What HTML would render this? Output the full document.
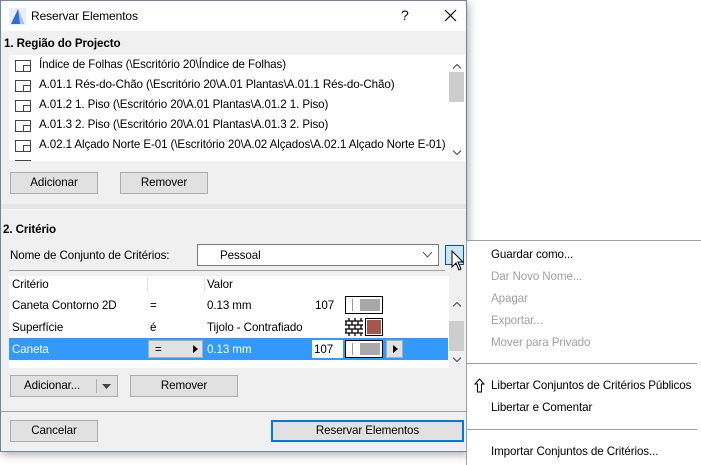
<!DOCTYPE html>
<html><head><meta charset="utf-8"><style>
*{box-sizing:border-box;margin:0;padding:0}
body{width:701px;height:465px;background:#fff;font-family:"Liberation Sans",sans-serif;font-size:11.6px;letter-spacing:-0.1px;color:#000;position:relative;overflow:hidden}
.a{position:absolute}
.dlg{left:0;top:0;width:467px;height:452px;background:#f0f0f0;border:1px solid #6d86a3;box-shadow:2px 3px 8px rgba(0,0,0,.3)}
.btn{position:absolute;background:#e1e1e1;border:1px solid #adadad;text-align:center;line-height:19px}
.t{position:absolute;white-space:nowrap}
.ico{position:absolute;width:16px;height:12px;border:1px solid #444;background:#fff}
.ico:after{content:"";position:absolute;right:0;bottom:0;width:6px;height:5px;border-left:1px solid #444;border-top:1px solid #444}
.mi{position:absolute;left:491px;white-space:nowrap}
.dis{color:#a0a0a0}
</style></head><body>
<div class="a dlg"></div>
<div class="a" style="left:1px;top:1px;width:465px;height:30px;background:#fff"></div>
<svg class="a" style="left:9px;top:8px" width="17" height="17"><rect x="0" y="0" width="17" height="17" fill="#e8eef6"/><path d="M2 16 L9 1 L15 16 Z" fill="#2b6fd0"/><path d="M9 1 L15 16 L11 16 Z" fill="#9cc2ee"/></svg>
<div class="t" style="left:31px;top:9px;font-size:12px">Reservar Elementos</div>
<div class="t" style="left:401px;top:7px;font-size:14px">?</div>
<svg class="a" style="left:444px;top:9px" width="13" height="13"><path d="M1 1L12 12M12 1L1 12" stroke="#000" stroke-width="1.2"/></svg>
<div class="t" style="left:4px;top:37px;font-weight:bold">1. Região do Projecto</div>
<div class="a" style="left:9px;top:55px;width:456px;height:106px;background:#fff;overflow:hidden">
<div class="ico" style="left:6px;top:5px"></div><div class="t" style="left:30px;top:3px">Índice de Folhas (\Escritório 20\Índice de Folhas)</div>
<div class="ico" style="left:6px;top:25px"></div><div class="t" style="left:30px;top:23px">A.01.1 Rés-do-Chão (\Escritório 20\A.01 Plantas\A.01.1 Rés-do-Chão)</div>
<div class="ico" style="left:6px;top:45px"></div><div class="t" style="left:30px;top:43px">A.01.2 1. Piso (\Escritório 20\A.01 Plantas\A.01.2 1. Piso)</div>
<div class="ico" style="left:6px;top:65px"></div><div class="t" style="left:30px;top:63px">A.01.3 2. Piso (\Escritório 20\A.01 Plantas\A.01.3 2. Piso)</div>
<div class="ico" style="left:6px;top:85px"></div><div class="t" style="left:30px;top:83px">A.02.1 Alçado Norte E-01 (\Escritório 20\A.02 Alçados\A.02.1 Alçado Norte E-01)</div>
<div class="ico" style="left:6px;top:105px"></div>
<div class="a" style="left:440px;top:0;width:16px;height:106px;background:#fff"></div>
<svg class="a" style="left:444px;top:9px" width="8" height="5"><path d="M0 4.5L4 0.5L8 4.5" fill="none" stroke="#555" stroke-width="1.2"/></svg>
<div class="a" style="left:440px;top:17px;width:15px;height:30px;background:#cdcdcd"></div>
<svg class="a" style="left:444px;top:95px" width="8" height="5"><path d="M0 0.5L4 4.5L8 0.5" fill="none" stroke="#555" stroke-width="1.2"/></svg>
</div>
<div class="btn" style="left:10px;top:172px;width:88px;height:22px">Adicionar</div>
<div class="btn" style="left:120px;top:172px;width:88px;height:22px">Remover</div>
<div class="a" style="left:1px;top:204px;width:465px;height:6px;background:#e6e6e6;border-bottom:1px solid #f8f8f8"></div>
<div class="t" style="left:3px;top:223px;font-weight:bold">2. Critério</div>
<div class="t" style="left:10px;top:249px">Nome de Conjunto de Critérios:</div>
<div class="a" style="left:197px;top:244px;width:242px;height:22px;background:#fff;border:1px solid #7a7a7a"></div>
<div class="t" style="left:220px;top:249px">Pessoal</div>
<svg class="a" style="left:423px;top:252px" width="9" height="6"><path d="M0 0L4.5 5L9 0" fill="none" stroke="#555"/></svg>
<div class="a" style="left:445px;top:245px;width:19px;height:20px;background:#cce4f7;border:1px solid #005499"></div>
<svg class="a" style="left:451px;top:250px" width="14" height="24"><path d="M1 1 L1 17 L5 13 L8 20 L10 19 L7 12 L12 12 Z" fill="#fff" stroke="#000"/></svg>
<div class="a" style="left:9px;top:270px;width:436px;height:1px;background:#a0a0a0"></div>
<div class="a" style="left:9px;top:276px;width:440px;height:92px;background:#fff"></div>
<div class="a" style="left:147px;top:277px;width:1px;height:16px;background:#e5e5e5"></div>
<div class="a" style="left:204px;top:277px;width:1px;height:16px;background:#e5e5e5"></div>
<div class="t" style="left:12px;top:278px">Critério</div>
<div class="t" style="left:207px;top:278px">Valor</div>
<div class="t" style="left:12px;top:299px">Caneta Contorno 2D</div>
<div class="t" style="left:150px;top:299px">=</div>
<div class="t" style="left:207px;top:299px">0.13 mm</div>
<div class="t" style="left:315px;top:299px">107</div>
<div class="a" style="left:345px;top:296px;width:38px;height:18px;border:1px solid #000;background:#fff"></div>
<div class="a" style="left:352px;top:299px;width:1px;height:12px;background:#999"></div>
<div class="a" style="left:360px;top:299px;width:20px;height:12px;background:#a8a8a8"></div>
<div class="t" style="left:12px;top:321px">Superfície</div>
<div class="t" style="left:150px;top:321px">é</div>
<div class="t" style="left:207px;top:321px">Tijolo - Contrafiado</div>
<svg class="a" style="left:345px;top:318px" width="18" height="18"><rect width="18" height="18" fill="#fff"/><path d="M0 3H18M0 7H18M0 11H18M0 15H18M4 0V3M10 0V3M16 0V3M1 3V7M7 3V7M13 3V7M4 7V11M10 7V11M16 7V11M1 11V15M7 11V15M13 11V15M4 15V18M10 15V18M16 15V18" stroke="#000" stroke-width="1.3"/></svg>
<div class="a" style="left:365px;top:318px;width:18px;height:18px;border:1px solid #000;background:#a9564a;box-shadow:inset 0 0 0 1px #fff"></div>
<div class="a" style="left:9px;top:338px;width:439px;height:22px;background:#3399ff"></div>
<div class="t" style="left:12px;top:343px;color:#fff">Caneta</div>
<div class="a" style="left:148px;top:340px;width:55px;height:18px;background:#e1e1e1;border:1px solid #adadad"></div>
<div class="t" style="left:155px;top:343px">=</div>
<svg class="a" style="left:193px;top:345px" width="5" height="8"><path d="M0 0L5 4L0 8Z" fill="#000"/></svg>
<div class="t" style="left:207px;top:343px;color:#fff">0.13 mm</div>
<div class="a" style="left:312px;top:340px;width:31px;height:18px;background:#fff"></div>
<div class="t" style="left:314px;top:343px">107</div>
<div class="a" style="left:345px;top:340px;width:38px;height:18px;border:1px solid #000;background:#fff"></div>
<div class="a" style="left:352px;top:343px;width:1px;height:12px;background:#999"></div>
<div class="a" style="left:360px;top:343px;width:20px;height:12px;background:#a8a8a8"></div>
<div class="a" style="left:386px;top:340px;width:17px;height:18px;background:#e1e1e1;border:1px solid #adadad"></div>
<svg class="a" style="left:393px;top:345px" width="5" height="8"><path d="M0 0L5 4L0 8Z" fill="#000"/></svg>
<div class="a" style="left:449px;top:293px;width:15px;height:68px;background:#f0f0f0"></div>
<svg class="a" style="left:453px;top:302px" width="8" height="5"><path d="M0 4.5L4 0.5L8 4.5" fill="none" stroke="#555" stroke-width="1.2"/></svg>
<div class="a" style="left:449px;top:321px;width:15px;height:30px;background:#cdcdcd"></div>
<svg class="a" style="left:453px;top:357px" width="8" height="5"><path d="M0 0.5L4 4.5L8 0.5" fill="none" stroke="#555" stroke-width="1.2"/></svg>
<div class="btn" style="left:10px;top:375px;width:108px;height:22px;text-align:left;padding-left:13px">Adicionar...</div>
<div class="a" style="left:96px;top:379px;width:1px;height:14px;background:#adadad"></div>
<svg class="a" style="left:102px;top:384px" width="9" height="5"><path d="M0 0L9 0L4.5 5Z" fill="#444"/></svg>
<div class="btn" style="left:130px;top:375px;width:108px;height:22px">Remover</div>
<div class="a" style="left:1px;top:411px;width:465px;height:1px;background:#a0a0a0"></div>
<div class="btn" style="left:10px;top:420px;width:88px;height:22px">Cancelar</div>
<div class="btn" style="left:271px;top:420px;width:193px;height:22px;border:2px solid #0078d7;line-height:17px">Reservar Elementos</div>
<div class="a" style="left:466px;top:240px;width:235px;height:225px;background:#fff;border:1px solid #a0a0a0;border-right:none;border-bottom:none"></div>
<div class="mi" style="top:248px">Guardar como...</div>
<div class="mi dis" style="top:270px">Dar Novo Nome...</div>
<div class="mi dis" style="top:292px">Apagar</div>
<div class="mi dis" style="top:314px">Exportar...</div>
<div class="mi dis" style="top:336px">Mover para Privado</div>
<div class="a" style="left:467px;top:363px;width:230px;height:1px;background:#a0a0a0"></div>
<svg class="a" style="left:474px;top:378px" width="11" height="15"><path d="M5.5 1L1 6H3.5V14H7.5V6H10Z" fill="none" stroke="#000"/></svg>
<div class="mi" style="top:379px">Libertar Conjuntos de Critérios Públicos</div>
<div class="mi" style="top:401px">Libertar e Comentar</div>
<div class="a" style="left:467px;top:429px;width:230px;height:1px;background:#a0a0a0"></div>
<div class="mi" style="top:445px">Importar Conjuntos de Critérios...</div>
</body></html>
